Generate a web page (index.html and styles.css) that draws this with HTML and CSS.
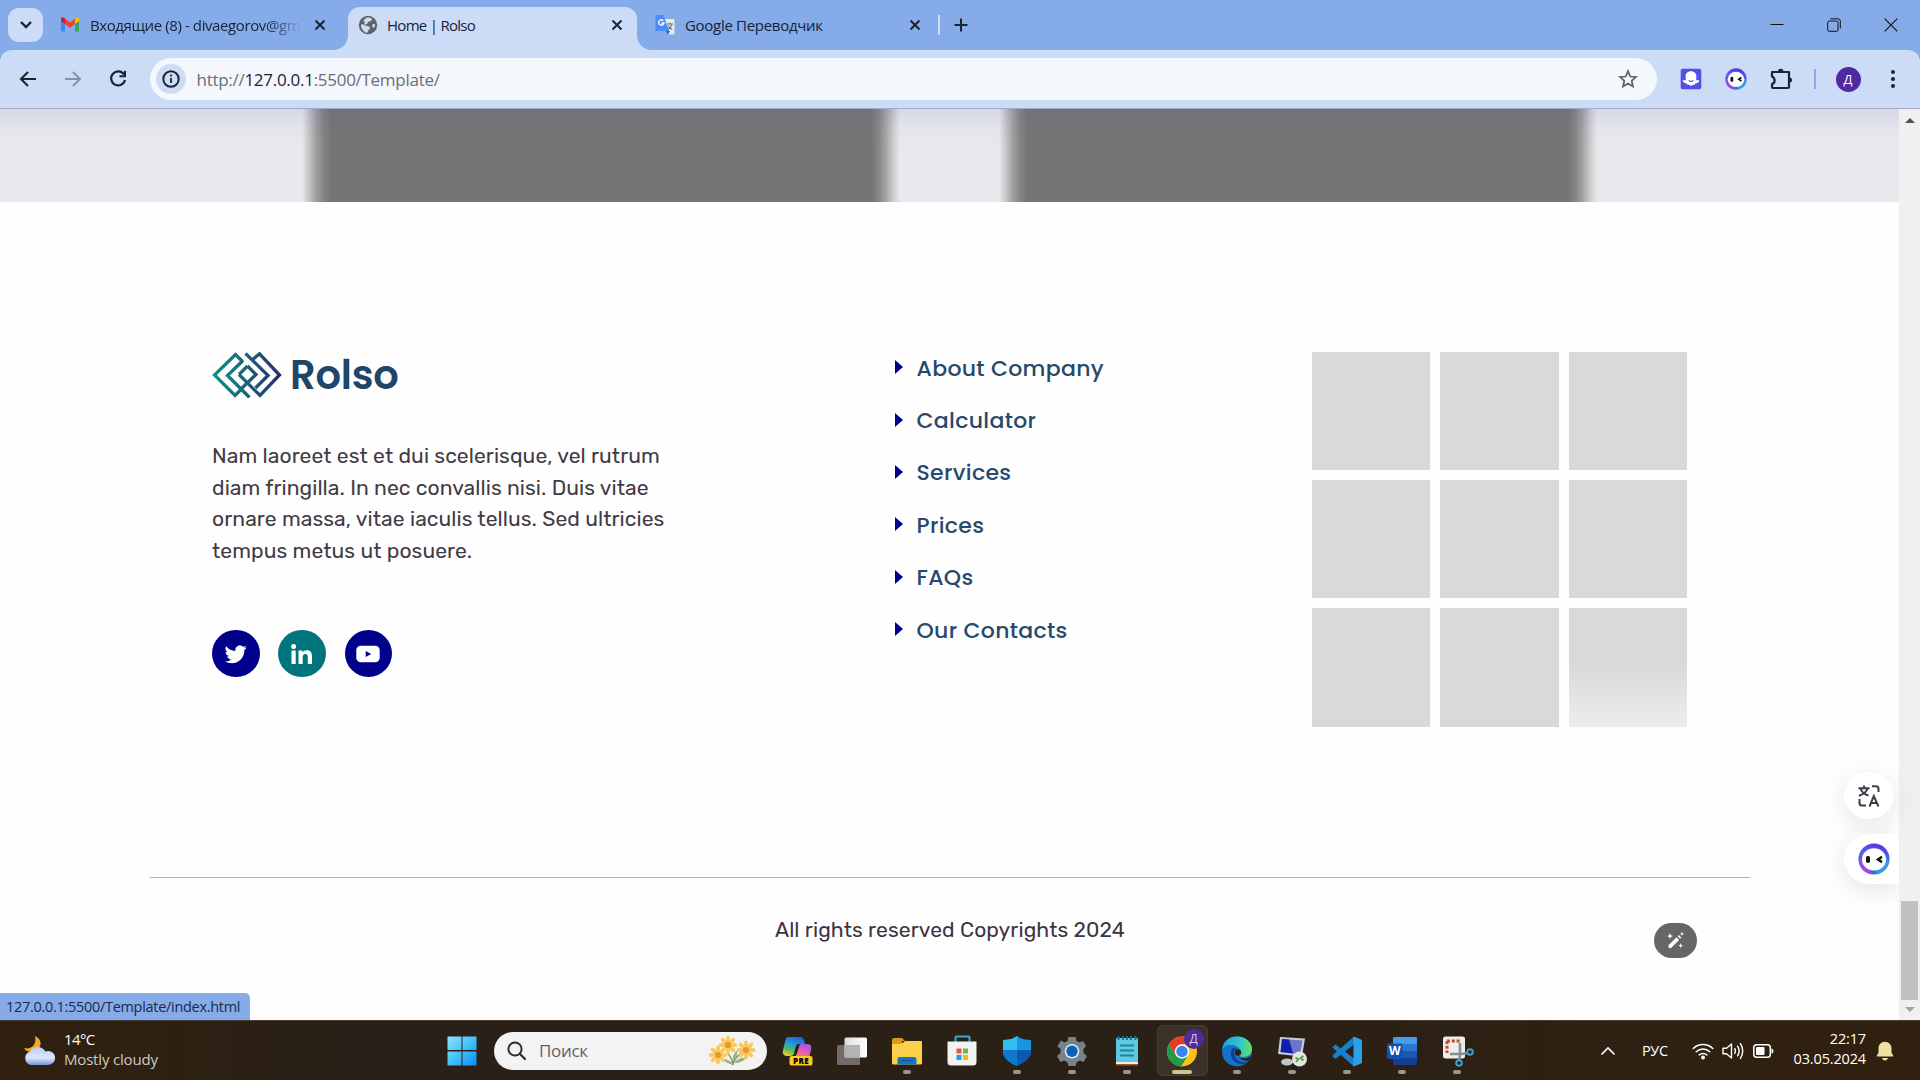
FILE: index.html
```html
<!DOCTYPE html>
<html lang="en">
<head>
<meta charset="utf-8">
<title>Home | Rolso</title>
<link rel="stylesheet" href="styles.css">
</head>
<body>
<div class="screen">
  <header class="tabstrip">
    <div class="tab-search"><svg width="14" height="10" viewBox="0 0 14 10"><path d="M2 2l5 5 5-5" fill="none" stroke="#1b2430" stroke-width="2.4"/></svg></div>
    <div class="tab tab-mail">
      <svg class="fav" width="20" height="18" viewBox="0 0 20 18"><path d="M1 3v12.500h4V7z" fill="#4285f4"/><path d="M15 7v8.500h4V3z" fill="#34a853"/><path d="M15 2.500V8l4-3V3c0-2-2-2.500-4-.5z" fill="#fbbc04"/><path d="M5 8V2.500L10 6.500l5-4V8l-5 4z" fill="#ea4335"/><path d="M1 3v2l4 3V2.500C3 .5 1 1 1 3z" fill="#c5221f"/></svg>
      <span class="tab-title fade">Входящие (8) - divaegorov@gm</span>
      <svg class="x" width="12" height="12" viewBox="0 0 12 12"><path d="M1.500 1.500l9 9m0-9l-9 9" stroke="#1b2430" stroke-width="2"/></svg>
    </div>
    <div class="tab tab-active">
      <svg class="fav" width="20" height="20" viewBox="0 0 20 20"><circle cx="10" cy="10" r="9.200" fill="#5f6368"/><path d="M8 3c3-1 5 0 6 1l-1 2-3 1-1 2-3 1 3 1c2 0 3 1 3 2l-2 3-1 2C6 17 3 14 3 10l1-1 2 1 1-3-2-1zM15 9l2 0c0 2-.5 3-1.500 4l-1.500-2z" fill="#ccdcf6"/></svg>
      <span class="tab-title">Home | Rolso</span>
      <svg class="x" width="12" height="12" viewBox="0 0 12 12"><path d="M1.500 1.500l9 9m0-9l-9 9" stroke="#1b2430" stroke-width="2"/></svg>
    </div>
    <div class="tab tab-translate">
      <svg class="fav" width="20" height="20" viewBox="0 0 20 20"><path d="M8 4h10.500q1 0 1 1v13.500q0 1-1 1H13z" fill="#e6e8ea"/><path d="M11 16h4l-2 3.500z" fill="#3157b8"/><path d="M1.500 0H8.500L14 16H1.500Q.500 16 .500 15V1q0-1 1-1z" fill="#4c8bf5"/><path d="M8.300 5.600A2.700 2.700 0 1 0 9 8H6.500" fill="none" stroke="#fff" stroke-width="1.300"/><path d="M12 9h6m-3-1.500V9m2 0c-.5 2.500-2 4-4 5.500m0-4c1 2 2 3 4 4" fill="none" stroke="#6b7075" stroke-width="1.100"/></svg>
      <span class="tab-title">Google Переводчик</span>
      <svg class="x" width="12" height="12" viewBox="0 0 12 12"><path d="M1.500 1.500l9 9m0-9l-9 9" stroke="#1b2430" stroke-width="2"/></svg>
    </div>
    <i class="tab-sep"></i>
    <svg class="plus" width="14" height="14" viewBox="0 0 14 14"><path d="M7 .5v13M.500 7h13" stroke="#1b2430" stroke-width="2"/></svg>
    <div class="win-buttons">
      <svg width="14" height="14" viewBox="0 0 14 14"><path d="M.500 6.500h13" stroke="#111" stroke-width="1"/></svg>
      <svg width="14" height="14" viewBox="0 0 14 14"><g fill="none" stroke="#111"><rect x=".7" y="3" width="10.300" height="10.300" rx="1.500"/><path d="M3.500.8h7.500a2.300 2.300 0 0 1 2.300 2.300v7.500"/></g></svg>
      <svg width="14" height="14" viewBox="0 0 14 14"><path d="M.7.7l12.600 12.600m0-12.600L.7 13.300" stroke="#111" stroke-width="1.100"/></svg>
    </div>
  </header>

  <nav class="toolbar">
    <div class="nav-icons">
      <svg width="18" height="18" viewBox="0 0 18 18"><path d="M17 9H2.500M9 2L2 9l7 7" fill="none" stroke="#1b2430" stroke-width="2.100"/></svg>
      <svg width="18" height="18" viewBox="0 0 18 18"><path d="M1 9h14.500M9 2l7 7-7 7" fill="none" stroke="#8593aa" stroke-width="1.900"/></svg>
      <svg width="18" height="18" viewBox="0 0 18 18"><path d="M15 4.500A7 7 0 1 0 16 10" fill="none" stroke="#1b2430" stroke-width="2.200"/><path d="M17 .8V7.300H10.500V5.300H15V.8z" fill="#1b2430"/></svg>
    </div>
    <div class="omnibox">
      <div class="site-info"><svg width="18" height="18" viewBox="0 0 18 18"><circle cx="9" cy="9" r="7.700" fill="none" stroke="#1b2430" stroke-width="2"/><path d="M9 8v5M9 4.500v2" stroke="#1b2430" stroke-width="1.800"/></svg></div>
      <span class="url">http://<b>127.0.0.1</b>:5500/Template/</span>
      <svg class="star" width="20" height="20" viewBox="0 0 20 20"><path d="M10 2.200l2.300 5.300 5.700.5-4.300 3.800 1.300 5.700L10 14.500l-5 3 1.300-5.700L2 8l5.700-.5z" fill="none" stroke="#5a626e" stroke-width="1.700"/></svg>
    </div>
    <div class="extensions">
      <svg width="22" height="22" viewBox="0 0 22 22"><rect x=".7" y=".7" width="20.600" height="20.600" rx="2" fill="#5150e6"/><path d="M11 3.200c3.500 0 5.400 2.300 5.400 5.300 0 1.500-.3 2.200-.3 3 .8 1 1.900.8 3.200.8-.3 2.700-2.300 3.200-3.800 2.900-.7 1.700-1.800 1.600-2.500 1.300-.7 1.600-3.300 1.600-4 0-.7.3-1.800.4-2.500-1.300-1.500.3-3.500-.2-3.800-2.900 1.300 0 2.400.2 3.200-.8 0-.8-.3-1.500-.3-3 0-3 1.900-5.300 5.400-5.300z" fill="#fff"/><path d="M8.800 12.200c1 1.800 3.400 1.800 4.400 0" fill="none" stroke="#5150e6" stroke-width="1.200"/></svg>
      <svg width="22" height="22" viewBox="0 0 36 36"><use href="#monica"/></svg>
      <svg width="24" height="24" viewBox="0 0 24 24"><path d="M3 5h17v15q0 1-1 1H4q-1 0-1-1v-3c3.500-1 3.500-6 0-7.500z" fill="none" stroke="#1b2430" stroke-width="2.200" stroke-linejoin="round"/><path d="M9 4.500a2.700 2.700 0 0 1 5.400 0zM20.500 10.500a2.500 2.500 0 0 1 0 5z" fill="#1b2430"/></svg>
      <i class="tool-sep"></i>
      <span class="avatar">Д</span>
      <svg width="6" height="20" viewBox="0 0 6 20"><g fill="#1b2430"><circle cx="3" cy="3" r="2"/><circle cx="3" cy="10" r="2"/><circle cx="3" cy="17" r="2"/></g></svg>
    </div>
  </nav>

  <div class="viewport">
    <div class="page">
      <section class="banner"><i class="blur-card"></i><i class="blur-card"></i></section>
      <footer class="footer">
        <div class="footer-top">
          <div class="about">
            <div class="logo">
              <svg width="70" height="46" viewBox="0 0 70 46">
                <defs><linearGradient id="lg" x1="0" y1="0" x2="70" y2="0" gradientUnits="userSpaceOnUse"><stop offset="0" stop-color="#0f938c"/><stop offset=".5" stop-color="#1c6378"/><stop offset="1" stop-color="#2a2a6c"/></linearGradient></defs>
                <g fill="none" stroke="url(#lg)" stroke-width="3.300"><path d="M30.500 9.500L23.500 2.500 2.500 23l20.500 20.500L29 37.500M33.500 1.500L56 23.500 43.500 36M39.500 8.500L47.500 1.800 67.500 23 48 43.500 27 22.500"/><path d="M31 8.500L15.500 23.500 37.500 45.500M28.500 37.500L44 22.500 35.500 14M35.500 14L27 22.500"/></g>
              </svg>
              <span>Rolso</span>
            </div>
            <p class="blurb">Nam laoreet est et dui scelerisque, vel rutrum<br>diam fringilla. In nec convallis nisi. Duis vitae<br>ornare massa, vitae iaculis tellus. Sed ultricies<br>tempus metus ut posuere.</p>
            <div class="social">
              <a><svg width="22" height="22" viewBox="0 0 24 24"><path fill="#fff" d="M23.600 4.900c-.9.400-1.800.6-2.800.8 1-.6 1.800-1.600 2.100-2.700-.9.600-2 1-3.100 1.200a4.900 4.900 0 0 0-8.400 4.500A13.900 13.900 0 0 1 1.300 3.500a4.900 4.900 0 0 0 1.500 6.600c-.8 0-1.600-.2-2.200-.6v.1c0 2.400 1.700 4.400 3.900 4.800-.7.200-1.500.2-2.200.1.600 1.900 2.400 3.400 4.600 3.400A9.900 9.900 0 0 1-.4 20a14 14 0 0 0 7.500 2.200c9.100 0 14-7.500 14-14v-.6c1-.7 1.800-1.600 2.500-2.700z"/></svg></a>
              <a class="teal"><svg width="22" height="20" viewBox="0 0 22 20"><g fill="#fff"><circle cx="2.600" cy="2.600" r="2.500"/><path d="M.5 6.500h4.200V20H.5zM7.500 6.500h4v1.900c.8-1.400 2.300-2.200 4.300-2.200 4 0 5.200 2.500 5.200 6.300V20h-4.200v-6.600c0-2-.4-3.500-2.300-3.500-2 0-2.800 1.400-2.800 3.500V20H7.500z"/></g></svg></a>
              <a><svg width="24" height="18" viewBox="0 0 24 18"><rect x=".3" y=".8" width="23.400" height="16.400" rx="4.500" fill="#fff"/><path d="M9.700 6v6l5.500-3z" fill="#00008b"/></svg></a>
            </div>
          </div>
          <ul class="links">
            <li>About Company</li>
            <li>Calculator</li>
            <li>Services</li>
            <li>Prices</li>
            <li>FAQs</li>
            <li>Our Contacts</li>
          </ul>
          <div class="gallery"><i></i><i></i><i></i><i></i><i></i><i></i><i></i><i></i><i class="faded"></i></div>
        </div>
        <p class="copy">All rights reserved Copyrights 2024</p>
      </footer>
      <div class="fab fab-translate"><svg width="22" height="22" viewBox="0 0 22 22"><g fill="none" stroke="#3a3e48" stroke-width="2"><path d="M.5 3.200h11M6 .5v2.500M9.500 3.500C8.500 7 5 9.500.8 10.700M2.500 3.500c1 3.500 4 6 8 7"/><path d="M14 1.200h4q2.500 0 2.500 2.500V7M1.500 14v4q0 2.500 2.500 2.500h4M11.500 21.500l4.300-10.500 4.700 10.500M13 18h6"/></g></svg></div>
      <div class="fab fab-monica"><svg width="32" height="32" viewBox="0 0 36 36"><defs><linearGradient id="mg" x1=".7" y1="0" x2=".4" y2="1"><stop offset="0" stop-color="#4a35e0"/><stop offset=".4" stop-color="#5c5ff0"/><stop offset="1" stop-color="#3a6be0"/></linearGradient></defs><g id="monica"><circle cx="18" cy="18" r="17.500" fill="url(#mg)"/><path d="M.9 21.500A17.500 17.500 0 0 0 14 35l3-8L5 17z" fill="#9a4be8"/><path d="M35 21a17.500 17.500 0 0 1-14 14l-2-8 13-10z" fill="#2f9fe2"/><ellipse cx="18" cy="18.500" rx="13.500" ry="12.500" fill="#fff"/><rect x="9" y="14.500" width="4.500" height="8" rx="2" fill="#111"/><path d="M27 15.500l-4.500 3L27 21.500" fill="none" stroke="#111" stroke-width="2.800"/></g></svg></div>
      <div class="wand"><svg width="17" height="17" viewBox="0 0 17 17"><path d="M1.500 13.300L9.500 5.300l2.600 2.600L4.100 15.900q-1.200.9-2.300-.3-1.100-1.100-.3-2.300zM10.600 4.300l1.200-1.200 2.500 2.500-1.200 1.200zM3 1l.9 2.200L6 4l-2.100.9L3 7l-.9-2.100L0 4l2.100-.8zM15 0l.6 1.300 1.300.6-1.300.5-.6 1.300-.6-1.300-1.300-.5 1.300-.6zM13.700 11l.7 1.900 1.900.7-1.900.7-.7 1.900-.7-1.900-1.900-.7 1.900-.7z" fill="#fff"/></svg></div>
      <div class="status">127.0.0.1:5500/Template/index.html</div>
    </div>
    <div class="scrollbar"><i class="up"></i><i class="thumb"></i><i class="down"></i></div>
  </div>

  <div class="taskbar">
    <div class="weather">
      <svg width="32" height="32" viewBox="0 0 32 32"><defs><linearGradient id="cl" x1="0" y1="0" x2="0" y2="1"><stop offset="0" stop-color="#b6cef7"/><stop offset=".6" stop-color="#dce7fb"/><stop offset="1" stop-color="#7795d9"/></linearGradient></defs><path d="M12 1c6 3 7 8 4 12s-12 6-15 0c7 2 13-3 11-12z" fill="#f4a62a"/><path d="M8 30a7 7 0 0 1-1-13.500A9 9 0 0 1 22.500 16.500 7 7 0 1 1 25 30z" fill="url(#cl)"/></svg>
      <div class="weather-text"><span class="deg">14°C</span><span class="cond">Mostly cloudy</span></div>
    </div>
    <svg class="start" width="30" height="30" viewBox="0 0 30 30"><defs><linearGradient id="wg" x1="0" y1="0" x2="1" y2="1"><stop offset="0" stop-color="#8be3ff"/><stop offset=".5" stop-color="#44c1fb"/><stop offset="1" stop-color="#0c8df3"/></linearGradient></defs><path d="M1 .5h13.500V14H.500V1zM15.500.5H29q.5 0 .5.5v13h-14zM.500 15.500h14v14H1q-.5 0-.5-.5zM15.500 15.500h14V29q0 .5-.5.500H15.500z" fill="url(#wg)"/></svg>
    <div class="search">
      <svg width="20" height="20" viewBox="0 0 20 20"><circle cx="8" cy="8" r="6.600" fill="none" stroke="#2b2e33" stroke-width="2"/><path d="M13 13l5 5" stroke="#2b2e33" stroke-width="2.300" stroke-linecap="round"/></svg>
      <span>Поиск</span>
      <svg class="flowers" width="48" height="32" viewBox="0 0 48 32">
        <defs><g id="fl"><g fill="#f9c95a"><ellipse cy="-5.800" rx="2" ry="3.600"/><ellipse cy="-5.800" rx="2" ry="3.600" transform="rotate(45)"/><ellipse cy="-5.800" rx="2" ry="3.600" transform="rotate(90)"/><ellipse cy="-5.800" rx="2" ry="3.600" transform="rotate(135)"/><ellipse cy="-5.800" rx="2" ry="3.600" transform="rotate(180)"/><ellipse cy="-5.800" rx="2" ry="3.600" transform="rotate(225)"/><ellipse cy="-5.800" rx="2" ry="3.600" transform="rotate(270)"/><ellipse cy="-5.800" rx="2" ry="3.600" transform="rotate(315)"/></g><circle r="3.100" fill="#e39a35"/></g></defs>
        <path d="M25 30C25 25 22 22 20 18M25 30c0-6 5-9 10-14M25 30c-3-3-7-4-10-6" fill="none" stroke="#789b61" stroke-width="1.400"/><path d="M25 29c-5 0-8-2-10-5 4 0 8 2 10 5zM26 28c3-4 7-6 12-5-3 4-7 5-12 5zM25 26c-1-4 1-8 4-11 1 5-1 9-4 11z" fill="#9db387"/>
        <use href="#fl" x="20" y="10"/><use href="#fl" x="10" y="20"/><use href="#fl" x="38" y="15"/>
      </svg>
    </div>
    <div class="apps">
      <div class="app"><svg width="32" height="32" viewBox="0 0 32 32"><defs><linearGradient id="ca" x1=".6" y1="0" x2=".2" y2="1"><stop offset="0" stop-color="#1767d8"/><stop offset=".4" stop-color="#239eda"/><stop offset=".7" stop-color="#58bb58"/><stop offset="1" stop-color="#f1ce35"/></linearGradient><linearGradient id="cb" x1=".7" y1="0" x2=".3" y2="1"><stop offset="0" stop-color="#a154ec"/><stop offset=".5" stop-color="#e45bb4"/><stop offset="1" stop-color="#f58b50"/></linearGradient></defs><path d="M7 2h12c3 0 4 2 5 7h-6c-2 0-3 1-4 5l-1 5c-1 2-4 2-6 2-4 0-6-2-5-6L4 7c1-3 1-5 3-5z" fill="url(#ca)"/><path d="M20 9h6c4 0 5 2 4 6l-2 8H11c3 0 4-2 5-5l2-6c.5-2 1-3 2-3z" fill="url(#cb)"/><rect x="8.500" y="21" width="23" height="9.500" rx="2" fill="#ffcb20"/><text x="20" y="29" text-anchor="middle" class="pre">PRE</text></svg></div>
      <div class="app"><svg width="32" height="30" viewBox="0 0 32 30"><defs><linearGradient id="tv" x1="0" y1="0" x2="1" y2="0"><stop offset="0" stop-color="#ddd"/><stop offset="1" stop-color="#fff"/></linearGradient></defs><rect x="1" y="9" width="23" height="20" rx="1.500" fill="#6f6c69"/><rect x="8.500" y="1.500" width="22.500" height="20" rx="1.500" fill="url(#tv)"/><path d="M8.500 9H24v12.500H8.500z" fill="#b4b3b2"/></svg></div>
      <div class="app run"><svg width="32" height="30" viewBox="0 0 32 30"><path d="M1 4q0-2 2-2h8l3 3h-3v6H1z" fill="#d79b16"/><path d="M1 8h9l4-3h16q1 0 1 1v21q0 1.500-1.500 1.500h-27Q1 28.500 1 27z" fill="#fdd049"/><path d="M6.500 28.500V23q0-2 2-2h15q2 0 2 2v5.500z" fill="#1475c5"/><path d="M10 24.500h12.500" stroke="#0c549c" stroke-width="1"/></svg></div>
      <div class="app"><svg width="32" height="32" viewBox="0 0 32 32"><path d="M9.500 7V2.500q0-1 1-1h12q1 0 1 1V7" fill="none" stroke="#35a6df" stroke-width="2"/><path d="M1.500 6.500h29V27q0 3.500-3.500 3.500H5q-3.500 0-3.500-3.500z" fill="#f3f2f2"/><path fill="#ee5533" d="M10.500 13.500h5v5h-5z"/><path fill="#77b72e" d="M17 13.500h5v5h-5z"/><path fill="#1aa0ea" d="M10.500 20h5v5h-5z"/><path fill="#fcb615" d="M17 20h5v5h-5z"/></svg></div>
      <div class="app run"><svg width="30" height="32" viewBox="0 0 30 32"><path d="M15 1C11 4 6 5 1 5v12c0 6 7 11 14 14z" fill="#1a93df"/><path d="M15 1v14H1V5c5 0 10-1 14-4z" fill="#35bff0"/><path d="M15 1c4 3 9 4 14 4v10H15z" fill="#1996df"/><path d="M15 15h14v2c0 6-7 11-14 14z" fill="#0a5bb0"/><path d="M1 15h14v16C8 28 1 23 1 17z" fill="#0e78d0"/></svg></div>
      <div class="app run"><svg width="32" height="32" viewBox="0 0 32 32"><path d="M12.500 2h7l1 4 3 1.500L27 6l3 5-2.500 3v4l3.500 3-3.500 6-4-1.500-3 2L19.500 31h-7l-1-3.500-3-2L4.500 27 1 21l3.500-3v-4L1.500 11 5 5.500l3.500 2 3-1.500z" fill="#79818c"/><circle cx="16" cy="16.300" r="7.300" fill="#e4e8ec"/><circle cx="16" cy="16.300" r="5.700" fill="#0b63b7"/></svg></div>
      <div class="app run"><svg width="24" height="32" viewBox="0 0 24 32"><path d="M1 28h22v2.500H1z" fill="#a5561f"/><path d="M1 26h22v3H1z" fill="#eee"/><path d="M1.500 3h21q.5 0 .5.500V27H1V3.500z" fill="#60c9e2"/><path d="M3.500 1v4M8 1v4m4-4v4m4-4v4m4.500-4v4" stroke="#157393" stroke-width="2"/><path d="M5 10.500h14m-14 5h14m-14 5h14" stroke="#1c86a2" stroke-width="2"/></svg></div>
      <div class="app run active"><svg width="32" height="32" viewBox="0 0 32 32"><circle cx="16" cy="16.500" r="15" fill="#fbc116"/><path d="M3 9A15 15 0 0 1 29 9H16l-6.500 11z" fill="#e33b2e"/><path d="M3 9A15 15 0 0 0 15 31.500L22 20.500 9.500 20z" fill="#229a49"/><circle cx="16" cy="16.500" r="7.200" fill="#fff"/><circle cx="16" cy="16.500" r="5.700" fill="#3b83ef"/></svg><span class="badge">Д</span></div>
      <div class="app run"><svg width="32" height="32" viewBox="0 0 32 32"><defs><linearGradient id="eg" x1="0" y1="0" x2="1" y2="0"><stop offset="0" stop-color="#1f9fe3"/><stop offset=".55" stop-color="#2cc4cf"/><stop offset="1" stop-color="#67e268"/></linearGradient></defs><circle cx="16" cy="16.500" r="15" fill="#1770c9"/><path d="M1 15C2 6 8 1.500 16 1.500c9 0 15 6 15 12.500 0 5-4 8-8 8-4 0-6-1.500-5-3.500 2-2 1-6-3-7.500C10 9 3 10 1 15z" fill="url(#eg)"/><path d="M12 13c-3 3-3 9 1 13 4 4 10 4 14 1-7 1-13-2-14-8 0-2 0-4 3-5-1-1-3-1-4-1z" fill="#123f8f"/><path d="M18 22c4 2.500 9 1.500 12-1.500l-2 5c-4 1-8-.5-10-3.500z" fill="#2b2015"/><circle cx="17" cy="17.500" r="3.200" fill="#2b2015"/></svg></div>
      <div class="app run"><svg width="32" height="32" viewBox="0 0 32 32"><ellipse cx="11" cy="27" rx="6" ry="3.500" fill="#c2c5c8"/><path d="M4 2l25 1.500-3 18L2 19z" fill="#c9ccd5"/><path d="M6 4l20.500 1.500-2.500 14L4.500 17z" fill="#6a74c8"/><path d="M6 4l7 .5 4 14L4.500 17z" fill="#101cb2"/><circle cx="23.500" cy="24" r="7.500" fill="#e3e6e5"/><path d="M19.500 22.500l3 2-2.500 2.500M27.500 21l-3 2 3 2.500" fill="none" stroke="#46a13c" stroke-width="1.700"/></svg></div>
      <div class="app run"><svg width="32" height="32" viewBox="0 0 32 32"><path d="M1.500 12l3-2.500L23 23.500V31.500L2 13z" fill="#1b7fcb"/><path d="M1.500 21.500l3 2.500L23 9.500V1.500L2 20z" fill="#1681c9"/><path d="M22.500 1.500l7.500 3q1 .5 1 1.500v21q0 1-1 1.500l-7.500 3z" fill="#2ba1ee"/></svg></div>
      <div class="app run"><svg width="32" height="30" viewBox="0 0 32 30"><path d="M8 1h22q1 0 1 1v6H7V2q0-1 1-1z" fill="#419fea"/><path d="M7 8h24v7H7z" fill="#2a77d1"/><path d="M7 15h24v7H7z" fill="#1958b7"/><path d="M7 22h24v6q0 1-1 1H8q-1 0-1-1z" fill="#123f92"/><rect x="1" y="7.500" width="15.500" height="15.500" rx="1.500" fill="#1452b0"/><text x="8.800" y="19" text-anchor="middle" class="word-w">W</text></svg></div>
      <div class="app run"><svg width="34" height="32" viewBox="0 0 34 32"><rect x="3" y="1.500" width="22" height="22" rx="2.500" fill="#eeedec"/><path d="M7 6h13M7 6v12" stroke="#c34b27" stroke-width="3" stroke-dasharray="3 1.800"/><path d="M20 8v12l-1 6M10 19h12l6-1" stroke="#898c90" stroke-width="2.500" fill="none"/><g fill="none" stroke="#3e9ed2" stroke-width="2"><circle cx="30" cy="17" r="2.800"/><circle cx="19" cy="28" r="2.800"/></g></svg></div>
    </div>
    <div class="tray">
      <svg class="chev" width="16" height="10" viewBox="0 0 16 10"><path d="M1.500 8.500L8 2l6.500 6.500" fill="none" stroke="#fff" stroke-width="1.600"/></svg>
      <span class="lang">РУС</span>
      <svg class="wifi" width="22" height="18" viewBox="0 0 22 18"><g fill="none" stroke="#fff" stroke-width="1.500" stroke-linecap="round"><path d="M1.200 6.500a14 14 0 0 1 19.600 0M4.200 9.800a9.800 9.800 0 0 1 13.600 0M7.200 12.900a5.500 5.500 0 0 1 7.600 0"/></g><circle cx="11" cy="15.500" r="2" fill="#fff"/></svg>
      <svg class="vol" width="22" height="18" viewBox="0 0 22 18"><g fill="none" stroke="#fff" stroke-width="1.400" stroke-linejoin="round"><path d="M1 6.300h3.500L9.500 2v14l-5-4.300H1zM12.500 6.200q1.800 2.800 0 5.600M15.300 3.700q3.700 5.300 0 10.600M18.200 1.200q5 7.800 0 15.600"/></g></svg>
      <svg class="batt" width="21" height="14" viewBox="0 0 21 14"><rect x=".8" y=".8" width="16.500" height="12.400" rx="2.800" fill="none" stroke="#fff" stroke-width="1.500"/><rect x="3" y="3" width="8.500" height="8" rx="1" fill="#fff"/><path d="M18.500 4.500q2 0 2 2.500t-2 2.500z" fill="#fff"/></svg>
      <div class="clock"><span class="hm">22:17</span><span class="date">03.05.2024</span></div>
      <svg class="bell" width="18" height="20" viewBox="0 0 18 20"><path d="M9 .8c4 0 6.500 3 6.500 6.500v4.500l1.700 2.700q.4 1-.7 1H1.500q-1.100 0-.7-1l1.700-2.700V7.300C2.500 3.800 5 .8 9 .8zM6 17h6q-.8 2.500-3 2.500T6 17z" fill="#efe0a0"/></svg>
    </div>
  </div>
</div>
</body>
</html>
```

FILE: styles.css
```css
* { box-sizing: border-box; }
body { margin: 0; background: #fff; font-family: "Open Sans", "Noto Sans", sans-serif; }
svg { display: block; flex: none; }
i { display: block; }
.screen { width: 1920px; height: 1080px; display: flex; flex-direction: column; overflow: hidden; background: #85abe8; }

/* tab strip */
.tabstrip { height: 50px; flex: none; display: flex; align-items: center; padding-left: 8px; }
.tab-search { width: 35px; height: 34px; border-radius: 11px; background: #ccdcf6; display: flex; align-items: center; justify-content: center; }
.tab { display: flex; align-items: center; font-size: 15px; letter-spacing: -0.4px; color: #14233a; white-space: nowrap; }
.tab-mail { width: 305px; padding: 0 22px 0 17px; }
.tab-title { margin-left: 10px; flex: 1; }
.tab-mail .tab-title { flex: none; width: 216px; }
.fade { -webkit-mask-image: linear-gradient(90deg, #000 82%, transparent 98%); mask-image: linear-gradient(90deg, #000 82%, transparent 98%); }
.tab-mail .x { margin-left: auto; }
.tab-active { position: relative; width: 289px; height: 43px; align-self: flex-end; background: #ccdcf6; border-radius: 12px 12px 0 0; padding: 0 14px 7px 10px; }
.tab-active .tab-title { margin-left: 9px; letter-spacing: -0.72px; }
.tab-active::before, .tab-active::after { content: ""; position: absolute; bottom: 0; width: 14px; height: 14px; }
.tab-active::before { left: -14px; background: radial-gradient(circle at 0 0, transparent 13.500px, #ccdcf6 14px); }
.tab-active::after { right: -14px; background: radial-gradient(circle at 100% 0, transparent 13.500px, #ccdcf6 14px); }
.tab-translate { width: 284px; padding-left: 18px; }
.tab-translate .tab-title { letter-spacing: -0.3px; }
.tab-sep { width: 2px; height: 20px; margin-left: 17px; background: #ccdcf6; }
.plus { margin-left: 14px; }
.win-buttons { display: flex; gap: 43px; margin: 0 22px 0 auto; }

/* toolbar */
.toolbar { height: 59px; flex: none; display: flex; align-items: center; background: #ccdcf6; border-bottom: 1px solid #a3abc4; border-radius: 12px 12px 0 0; }
.nav-icons { display: flex; gap: 27px; width: 150px; padding-left: 18.500px; }
.omnibox { width: 1507px; height: 42px; border-radius: 21px; background: #f4f7fc; display: flex; align-items: center; padding: 0 19.500px 0 6px; }
.site-info { width: 30px; height: 30px; border-radius: 50%; background: #ccdcf6; display: flex; align-items: center; justify-content: center; }
.url { margin-left: 10.500px; flex: 1; font-size: 17px; letter-spacing: -0.28px; color: #6a6f78; }
.url b { font-weight: 400; color: #1b2430; }
.extensions { display: flex; align-items: center; margin-left: 22.500px; }
.extensions svg:nth-child(2) { margin-left: 23px; }
.extensions svg:nth-child(3) { margin-left: 22px; }
.tool-sep { width: 2px; height: 20px; margin-left: 21px; background: #85abe8; }
.avatar { width: 25px; height: 25px; margin: 0 29px 0 20px; border-radius: 50%; background: #5129a3; color: #fff; font-size: 13px; line-height: 24px; text-align: center; }

/* page */
.viewport { flex: 1; display: flex; min-height: 0; }
.page { position: relative; width: 1899px; background: #fefefe; }
.banner { position: relative; height: 93px; background: #e8e9ed; display: flex; gap: 99px; padding-left: 302px; }
.banner::after { content: ""; position: absolute; inset: 0; background: linear-gradient(rgba(80, 80, 190, .11), rgba(90, 90, 170, .03) 20px, transparent 38px); }
.blur-card { width: 598px; background: linear-gradient(90deg, #e8e9ed, #cbcbcd 6px, #a0a0a0 14px, #858585 21px, #757575 29px, #757575 569px, #858585 576px, #a0a0a0 583px, #cbcbcd 591px, #e8e9ed); }
.footer { width: 1600px; margin: 0 149px 0 150px; }
.footer-top { display: flex; height: 676px; padding: 150px 63px 0 62px; border-bottom: 1px solid #b4b4b6; }
.about { width: 683px; }
.logo { display: flex; align-items: center; height: 46px; }
.logo span { margin-left: 8px; font: 600 40px/46px "Poppins", "Inter", sans-serif; color: #1f4569; letter-spacing: -0.2px; }
.blurb { margin: 42px 0 0; font: 400 21.120px/31.700px "Rubik", "Inter", sans-serif; letter-spacing: .07px; color: #423a44; white-space: nowrap; }
.social { display: flex; gap: 18.800px; margin-top: 63px; }
.social a { width: 47.500px; height: 47.500px; border-radius: 50%; background: #00008b; display: flex; align-items: center; justify-content: center; }
.social .teal { background: #00757d; }
.links { list-style: none; margin: 0; padding: 0; width: 417px; }
.links li { display: flex; align-items: center; height: 32.400px; margin-bottom: 20px; font: 500 22px/33px "Poppins", "Inter", sans-serif; letter-spacing: .32px; color: #27496c; white-space: nowrap; }
.links li::before { content: ""; border: solid transparent; border-width: 7px 0 7px 8px; border-left-color: #00008b; margin: -2px 13.500px 0 0; }
.gallery { display: grid; grid-template-columns: repeat(3, 1fr); grid-template-rows: 118px 118px 119px; gap: 10px; width: 375px; }
.gallery i { background: #d9d9d9; }
.gallery .faded { background: linear-gradient(#d9d9d9 50%, #ededed); }
.copy { margin: 36px 0 0; text-align: center; font: 400 21.120px/31px "Rubik", "Inter", sans-serif; letter-spacing: .09px; color: #3c343e; }

/* floating controls */
.fab { position: absolute; background: #fff; display: flex; align-items: center; justify-content: center; box-shadow: 0 6px 26px rgba(0, 0, 0, .1); }
.fab-translate { left: 1844px; top: 663px; width: 50px; height: 47px; border-radius: 25px; }
.fab-monica { left: 1844px; top: 725px; width: 55px; height: 50px; border-radius: 25px 0 0 25px; padding-left: 4px; clip-path: inset(-30px 0 -40px -30px); }
.wand { position: absolute; left: 1654px; top: 814px; width: 43px; height: 35px; border-radius: 18px; background: #666; display: flex; align-items: center; justify-content: center; }
.status { position: absolute; left: 0; bottom: 0; width: 250px; height: 27px; border-radius: 0 5px 0 0; background: #85abe8; padding-left: 6px; font-size: 14.500px; line-height: 28px; letter-spacing: -0.3px; color: #1b2a48; white-space: nowrap; }

.scrollbar { width: 21px; background: #f0f0f0; display: flex; flex-direction: column; align-items: center; padding: 9px 0 8px; }
.up { border: solid transparent; border-width: 0 5px 5px; border-bottom-color: #505050; }
.thumb { width: 17px; height: 99px; margin-top: auto; background: #c1c1c1; }
.down { margin-top: 7px; border: solid transparent; border-width: 5px 5px 0; border-top-color: #a3a3a3; }

/* taskbar */
.taskbar { height: 60px; flex: none; display: flex; align-items: center; background: linear-gradient(90deg, #30200f, #2a2018 20%, #2c2015 70%, #302010); border-top: 1px solid #48403a; color: #fff; }
.weather { width: 446.500px; padding-left: 23px; display: flex; align-items: center; }
.weather-text { display: flex; flex-direction: column; margin: -3px 0 0 9px; font-size: 15px; line-height: 20px; letter-spacing: -0.18px; }
.deg { letter-spacing: -0.6px; }
.cond { color: #cfcac5; }
.search { width: 273px; height: 38px; margin-left: 17.500px; border-radius: 19px; background: #f3f3f3; display: flex; align-items: center; padding: 0 11px 0 13px; color: #63615f; font-size: 17px; letter-spacing: -0.3px; }
.search span { margin: -1px 0 0 12px; }
.flowers { margin-left: auto; }
.apps { display: flex; margin-left: 4.500px; }
.app { position: relative; width: 51px; height: 51px; margin-right: 4px; border-radius: 6px; display: flex; align-items: center; justify-content: center; }
.run::after { content: ""; position: absolute; bottom: 2px; width: 8px; height: 4px; border-radius: 2px; background: #9c9691; }
.active { background: #3c3128; box-shadow: inset 0 0 0 1px #483d34; }
.active::after { width: 20px; background: #d3c28c; }
.badge { position: absolute; right: 4px; top: 4px; width: 20px; height: 20px; border-radius: 50%; background: #50299c; font-size: 12px; line-height: 19px; text-align: center; color: #d8cdea; }
.pre { font: 800 8px "Open Sans", sans-serif; letter-spacing: .4px; }
.word-w { font: 700 12px "Open Sans", sans-serif; fill: #fff; }
.tray { display: flex; align-items: center; margin-left: auto; padding-right: 26px; font-size: 14.500px; letter-spacing: -0.15px; }
.lang { margin: -1px 0 0 26px; width: 50px; letter-spacing: -0.4px; }
.vol { margin-left: 8px; }
.batt { margin-left: 9px; }
.clock { width: 92px; margin-top: -3px; display: flex; flex-direction: column; text-align: right; line-height: 20px; }
.bell { margin-left: 10px; }
```
